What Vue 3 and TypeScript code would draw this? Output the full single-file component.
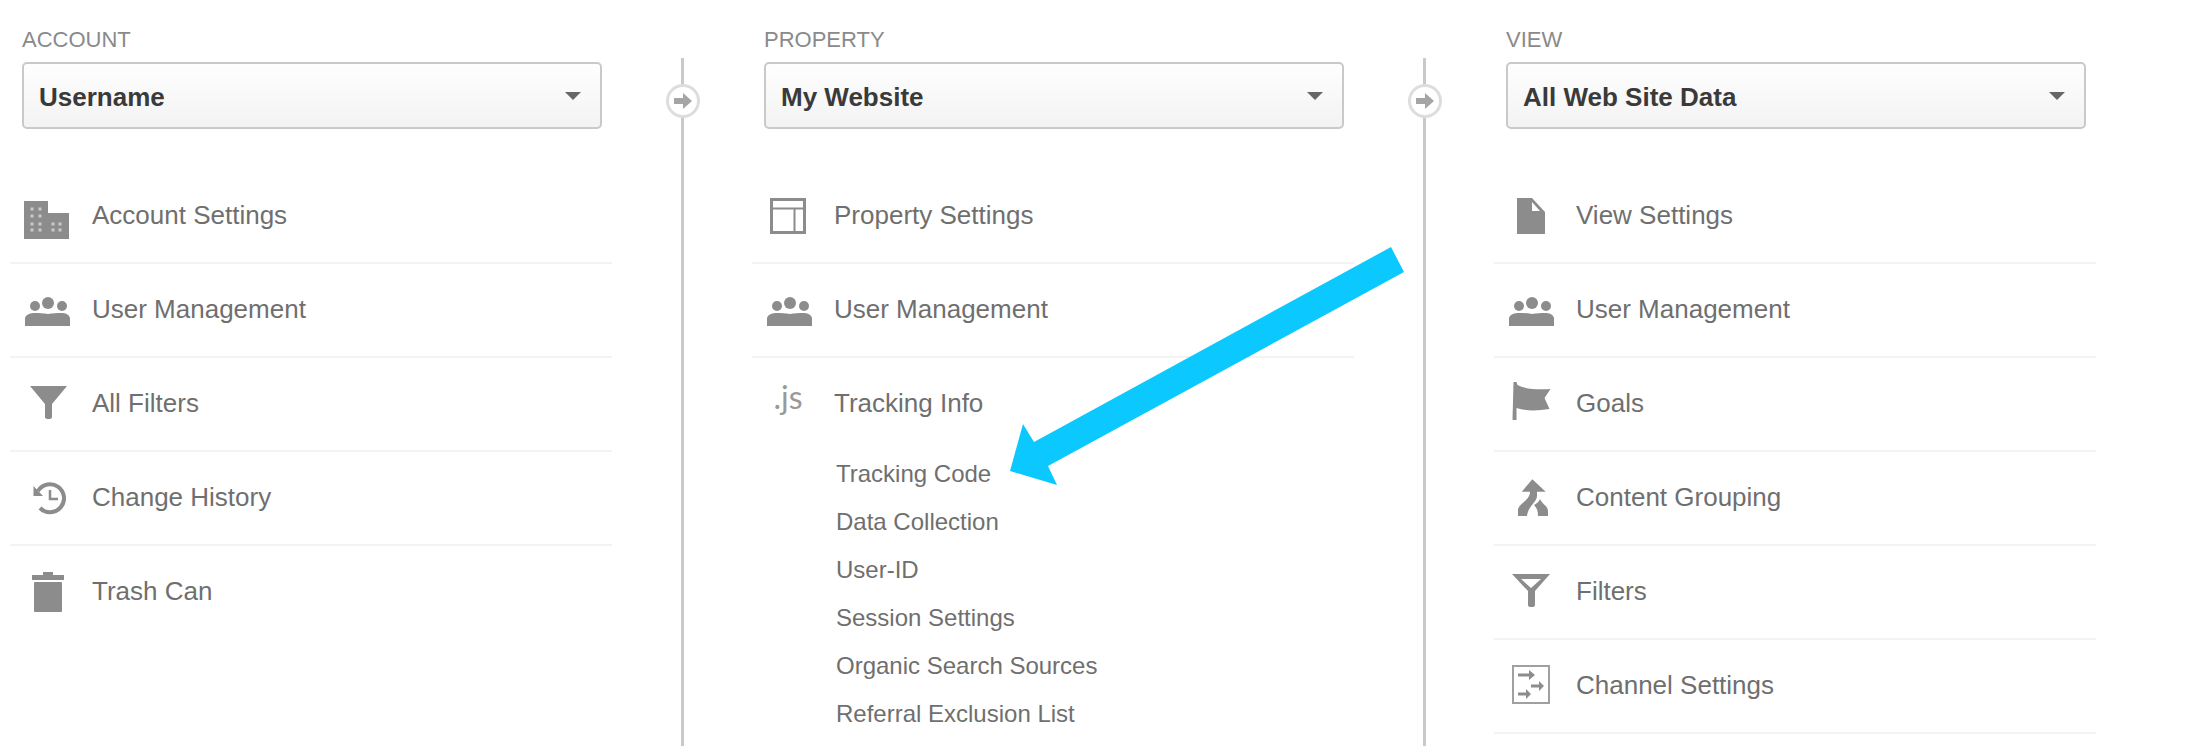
<script setup lang="ts">
interface Item {
  label: string
  icon: string
  children?: string[]
}

interface Column {
  title: string
  value: string
  items: Item[]
}

const columns: Column[] = [
  {
    title: 'ACCOUNT',
    value: 'Username',
    items: [
      { label: 'Account Settings', icon: 'building' },
      { label: 'User Management', icon: 'users' },
      { label: 'All Filters', icon: 'funnel' },
      { label: 'Change History', icon: 'history' },
      { label: 'Trash Can', icon: 'trash' },
    ],
  },
  {
    title: 'PROPERTY',
    value: 'My Website',
    items: [
      { label: 'Property Settings', icon: 'layout' },
      { label: 'User Management', icon: 'users' },
      {
        label: 'Tracking Info',
        icon: 'js',
        children: [
          'Tracking Code',
          'Data Collection',
          'User-ID',
          'Session Settings',
          'Organic Search Sources',
          'Referral Exclusion List',
        ],
      },
    ],
  },
  {
    title: 'VIEW',
    value: 'All Web Site Data',
    items: [
      { label: 'View Settings', icon: 'doc' },
      { label: 'User Management', icon: 'users' },
      { label: 'Goals', icon: 'flag' },
      { label: 'Content Grouping', icon: 'merge' },
      { label: 'Filters', icon: 'funnel-outline' },
      { label: 'Channel Settings', icon: 'channel' },
    ],
  },
]

const windows = [
  [10, 13], [18, 13], [10, 20], [18, 20], [10, 28], [18, 28], [10, 34], [18, 34],
  [31, 28], [38, 28], [31, 34], [38, 34],
]
</script>

<template>
  <div class="page">
    <template v-for="(col, i) in columns" :key="col.title">
      <section class="col">
        <div class="col-title">{{ col.title }}</div>
        <div class="picker">
          <span class="picker-value">{{ col.value }}</span>
          <i class="caret" />
        </div>
        <ul class="menu">
          <li v-for="item in col.items" :key="item.label" class="entry" :class="{ open: item.children }">
            <div class="row">
              <span v-if="item.icon === 'js'" class="icon js">.js</span>
              <svg v-else class="icon" viewBox="0 0 48 48" width="48" height="48" fill="#8c8c8c">
                <template v-if="item.icon === 'building'">
                  <path d="M2 5h24v12h21v26H2z" />
                  <g fill="#c9c9c9">
                    <rect v-for="p in windows" :key="p.join()" :x="p[0] - 1.500" :y="p[1] - 1.500" width="3" height="3" />
                  </g>
                </template>
                <template v-else-if="item.icon === 'users'">
                  <circle cx="13" cy="16" r="5" />
                  <circle cx="26" cy="13" r="6" />
                  <circle cx="40" cy="16" r="5" />
                  <path d="M3 36v-8c1-4 6-5 10-5 4 0 8 0 13 1 5-1 9-1 13-1 4 0 8 1 9 5v8z" />
                </template>
                <path v-else-if="item.icon === 'funnel'" d="M8 2h37L30 20v13q0 2-3.500 2t-3.500-2V20z" />
                <template v-else-if="item.icon === 'history'">
                  <path d="M16 13A14 14 0 1 1 18 30" fill="none" stroke="#8c8c8c" stroke-width="4" />
                  <path d="M11.500 8v10H21z" />
                  <path d="M28 12v9h8" fill="none" stroke="#8c8c8c" stroke-width="2.500" />
                </template>
                <template v-else-if="item.icon === 'trash'">
                  <path d="M21 0h10v3h11v5H10V3h11z" />
                  <rect x="12" y="10" width="28" height="30" rx="1" />
                </template>
                <g v-else-if="item.icon === 'layout'" fill="none" stroke="#8c8c8c" stroke-width="3">
                  <rect x="7.500" y="3.500" width="33" height="33" />
                  <path d="M7.500 12.500h33M30.500 12.500v24" stroke-width="2" />
                </g>
                <path v-else-if="item.icon === 'doc'" fill-rule="evenodd" d="M11 2h15l13 14v22H11zM26 6v9h8z" />
                <path v-else-if="item.icon === 'flag'" d="M7.500-2h3l1 3c8 4 20 5 33 4l-6 9 5 11c-13 2-24 2-33-1v12h-4z" />
                <template v-else-if="item.icon === 'merge'">
                  <path d="M26.300 1.300 39.700 13.700H31V18C31 24 22 28 21 38H12V31C14 25 24 22 24 13.700H15.700z" />
                  <path d="M34 21C36 26 42 28 42 33V38H32C32 33 31 30 28 27 30 26 33 24 34 21z" />
                </template>
                <path v-else-if="item.icon === 'funnel-outline'" fill-rule="evenodd" d="M6 2h38L29 19v14q0 2-3.500 2T22 33V19zM15 7l10 9 10-9z" />
                <template v-else-if="item.icon === 'channel'">
                  <rect x="7" y="0" width="36" height="37" fill="none" stroke="#a0a0a0" stroke-width="2" />
                  <path d="M12 7.500h11V4l6 5-6 5v-3.500H12zM25 18.500h8V15l5 5-5 5v-3.500h-8zM12 26.500h8V23l5 5-5 5v-3.500h-8z" />
                </template>
              </svg>
              <span class="label">{{ item.label }}</span>
            </div>
            <ul v-if="item.children" class="sub">
              <li v-for="child in item.children" :key="child">{{ child }}</li>
            </ul>
          </li>
        </ul>
      </section>
      <div v-if="i < 2" class="link">
        <span class="link-dot">
          <svg viewBox="0 0 20 16" width="20" height="16"><path d="M1 5h9V0l9 8-9 8v-5H1z" fill="#a5a5a5" /></svg>
        </span>
      </div>
    </template>

    <svg class="pointer" viewBox="0 0 2188 746" width="2188" height="746">
      <polygon points="1391,247 1404,272 1048,466 1057,485 1010,471 1023,424 1034,442" fill="#0bc9ff" />
    </svg>
  </div>
</template>

<style>
html, body {
  background: #fff;
  overflow: hidden;
}
</style>

<style scoped>
.page {
  position: relative;
  display: flex;
  width: 2188px;
  height: 746px;
  box-sizing: border-box;
  padding-left: 10px;
  overflow: hidden;
  font-family: "Liberation Sans", Arial, sans-serif;
  color: #6f6f6f;
}

.col {
  width: 602px;
  flex: none;
}

.col-title {
  height: 62px;
  padding: 29px 0 0 12px;
  box-sizing: border-box;
  font-size: 22px;
  line-height: 22px;
  color: #8a8a8a;
}

.picker {
  display: flex;
  align-items: center;
  justify-content: space-between;
  height: 67px;
  margin: 0 10px 41px 12px;
  padding: 0 19px 0 15px;
  box-sizing: border-box;
  border: 2px solid #c9c9c9;
  border-radius: 5px;
  background: linear-gradient(#fefefe, #f3f3f3);
  font-size: 26px;
  font-weight: 700;
  color: #3a3a3a;
}

.picker-value {
  margin-top: 3px;
}

.caret {
  width: 0;
  height: 0;
  border-left: 8px solid transparent;
  border-right: 8px solid transparent;
  border-top: 8px solid #666;
}

.menu,
.sub {
  list-style: none;
  margin: 0;
  padding: 0;
}

.entry {
  border-bottom: 2px solid #f3f3f3;
}

.entry.open,
.col:first-child .entry:last-child {
  border-bottom: none;
}

.row {
  display: flex;
  align-items: flex-start;
  height: 92px;
  padding: 26px 0 0 12px;
  box-sizing: border-box;
}

.icon {
  flex: none;
  width: 48px;
  height: 48px;
  overflow: visible;
}

.js {
  margin-top: -7px;
  font-family: Lato, sans-serif;
  font-weight: 400;
  font-size: 32px;
  line-height: 40px;
  color: #999;
  text-align: center;
}

.label {
  margin-left: 22px;
  font-size: 26px;
  line-height: 38px;
}

.sub {
  margin-top: 0;
  padding-left: 84px;
  font-size: 24px;
  line-height: 48px;
}

.link {
  position: relative;
  flex: none;
  width: 140px;
  margin-top: 58px;
}

.link::before {
  content: "";
  position: absolute;
  left: 69px;
  top: 0;
  bottom: 0;
  width: 3px;
  background: #c9c9c9;
}

.link-dot {
  position: absolute;
  left: 54px;
  top: 26px;
  display: flex;
  align-items: center;
  justify-content: center;
  width: 34px;
  height: 34px;
  box-sizing: border-box;
  border: 3px solid #ddd;
  border-radius: 50%;
  background: #fff;
}

.pointer {
  position: absolute;
  left: 0;
  top: 0;
  pointer-events: none;
}
</style>
